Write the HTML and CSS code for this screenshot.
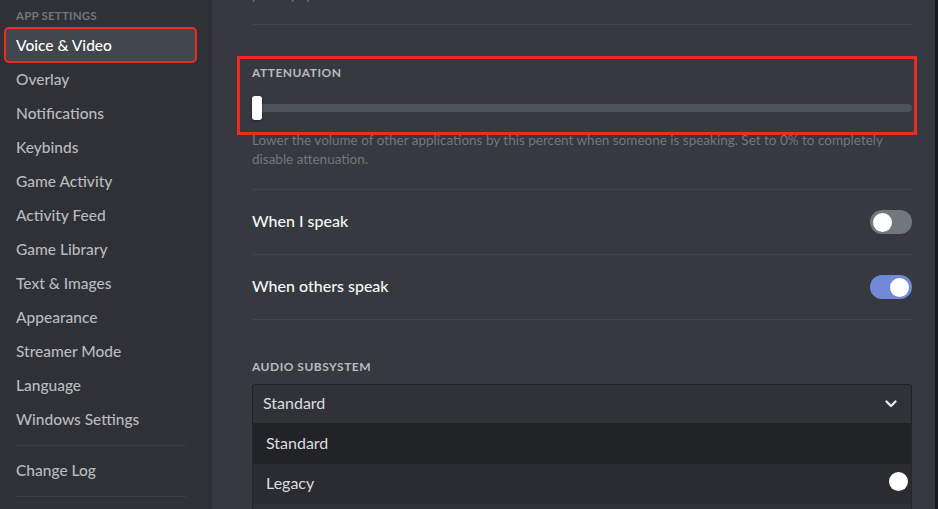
FILE: index.html
```html
<!DOCTYPE html>
<html>
<head>
<meta charset="utf-8">
<link rel="stylesheet" href="styles.css">
</head>
<body>
<div class="app">
  <nav class="sidebar">
    <div class="side-header">App Settings</div>
    <div class="side-item selected">Voice &amp; Video</div>
    <div class="side-item">Overlay</div>
    <div class="side-item">Notifications</div>
    <div class="side-item">Keybinds</div>
    <div class="side-item">Game Activity</div>
    <div class="side-item">Activity Feed</div>
    <div class="side-item">Game Library</div>
    <div class="side-item">Text &amp; Images</div>
    <div class="side-item">Appearance</div>
    <div class="side-item">Streamer Mode</div>
    <div class="side-item">Language</div>
    <div class="side-item">Windows Settings</div>
    <div class="side-sep"></div>
    <div class="side-item">Change Log</div>
    <div class="side-sep"></div>
  </nav>
  <main class="content">
    <p class="prev-text">priority speaker is active.</p>
    <div class="divider first"></div>
    <section class="highlight">
      <h5 class="label">Attenuation</h5>
      <div class="slider">
        <div class="track"></div>
        <div class="thumb"></div>
      </div>
    </section>
    <p class="desc">Lower the volume of other applications by this percent when someone is speaking. Set to 0% to completely disable attenuation.</p>
    <div class="divider"></div>
    <div class="toggle-row">
      <span class="row-title">When I speak</span>
      <span class="switch off"><span class="knob"></span></span>
    </div>
    <div class="divider"></div>
    <div class="toggle-row">
      <span class="row-title">When others speak</span>
      <span class="switch on"><span class="knob"></span></span>
    </div>
    <div class="divider"></div>
    <h5 class="label audio">Audio Subsystem</h5>
    <div class="select">
      <span class="opt-text">Standard</span>
      <svg class="chev" width="14" height="14" viewBox="0 0 14 14"><path d="M2.5 4.5 L7 9 L11.5 4.5" fill="none" stroke="#e6e7e8" stroke-width="2.4" stroke-linecap="round" stroke-linejoin="round"/></svg>
    </div>
    <div class="options">
      <div class="option active"><span class="opt-text">Standard</span></div>
      <div class="option"><span class="opt-text">Legacy</span><span class="dot"></span></div>
      <div class="option last"></div>
    </div>
  </main>
  <div class="edge"></div>
</div>
</body>
</html>
```

FILE: styles.css
```css
* { box-sizing: border-box; }
html, body {
  margin: 0;
  padding: 0;
  width: 938px;
  height: 509px;
  overflow: hidden;
  background: #36393f;
  font-family: Lato, "Open Sans", sans-serif;
}
.app {
  display: flex;
  width: 938px;
  height: 509px;
  overflow: hidden;
}
.sidebar {
  width: 212px;
  flex: none;
  background: #2f3136;
  padding: 0 17px 0 6px;
  display: flex;
  flex-direction: column;
}
.sidebar > * { flex: none; }
.side-header {
  padding: 8px 0 0 10px;
  height: 29px;
  line-height: 16px;
  font-size: 11.5px;
  font-weight: 700;
  text-transform: uppercase;
  letter-spacing: 0.2px;
  color: #72767d;
}
.side-item {
  height: 32px;
  line-height: 32px;
  margin-bottom: 2px;
  padding-left: 10px;
  border-radius: 3px;
  font-size: 15.5px;
  font-weight: 500;
  color: #b9bbbe;
  white-space: nowrap;
}
.side-item.selected {
  background: #42464d;
  color: #ffffff;
  outline: 2px solid #ee2a22;
  outline-offset: 0px;
}
.side-sep {
  height: 1px;
  background: #3b3e44;
  margin: 8px 9px 8px 10px;
}
.content {
  flex: 1;
  padding: 0 23px 0 40px;
  display: flex;
  flex-direction: column;
  min-width: 0;
}
.content > * { flex: none; }
.prev-text {
  margin: -15px 0 0 0;
  height: 19px;
  line-height: 19px;
  font-size: 14px;
  color: #72767d;
}
.divider {
  height: 1px;
  background: #42454b;
}
.divider.first { margin-top: 20px; }
.highlight {
  margin: 31px -5px 0 -15px;
  border: 3px solid #ee2a22;
  padding: 6px 2px 12px 12px;
}
.label {
  margin: 0;
  height: 16px;
  line-height: 16px;
  font-size: 12px;
  font-weight: 700;
  text-transform: uppercase;
  letter-spacing: 0.5px;
  color: #b9bbbe;
}
.slider {
  margin-top: 15px;
  height: 24px;
  display: flex;
  align-items: center;
}
.track {
  flex: 1;
  height: 8px;
  border-radius: 4px;
  background: #4f545c;
  order: 2;
  margin-left: -10px;
}
.thumb {
  order: 1;
  width: 10px;
  height: 24px;
  border-radius: 3px;
  background: #ffffff;
  position: relative;
  z-index: 1;
  box-shadow: 0 1px 3px rgba(0,0,0,0.4);
}
.desc {
  margin: -4px 0 20px 0;
  font-size: 13.5px;
  line-height: 19px;
  color: #72767d;
  padding-right: 24px;
}
.toggle-row {
  height: 64px;
  display: flex;
  align-items: center;
  justify-content: space-between;
}
.row-title {
  font-size: 16px;
  font-weight: 500;
  color: #f6f6f7;
  padding-bottom: 4px;
}
.switch {
  width: 42px;
  height: 24px;
  border-radius: 12px;
  display: flex;
  align-items: center;
  padding: 0 3px;
}
.switch.off { background: #72767d; justify-content: flex-start; }
.switch.on { background: #7289da; justify-content: flex-end; }
.knob {
  width: 19px;
  height: 19px;
  border-radius: 50%;
  background: #ffffff;
}
.label.audio { margin-top: 39px; }
.select {
  margin-top: 9px;
  height: 40px;
  background: #303238;
  border: 1px solid #202225;
  border-radius: 3px 3px 0 0;
  display: flex;
  align-items: center;
  justify-content: space-between;
  padding: 0 13px 0 10px;
  font-size: 16px;
  color: #dcddde;
}
.opt-text { padding-bottom: 4px; }
.chev { display: block; }
.options {
  display: flex;
  flex-direction: column;
}
.option {
  height: 40px;
  display: flex;
  align-items: center;
  justify-content: space-between;
  padding: 0 3px 0 13px;
  font-size: 16px;
  color: #dcddde;
  background: #2a2c31;
  border-left: 1px solid #24262a;
  border-right: 1px solid #24262a;
}
.option.active { background: #222327; }
.option.last { background: #2f3136; }
.dot {
  width: 19px;
  height: 19px;
  border-radius: 50%;
  background: #ffffff;
  margin-bottom: 5px;
}
.edge {
  width: 3px;
  flex: none;
  background: #18191c;
}
```
